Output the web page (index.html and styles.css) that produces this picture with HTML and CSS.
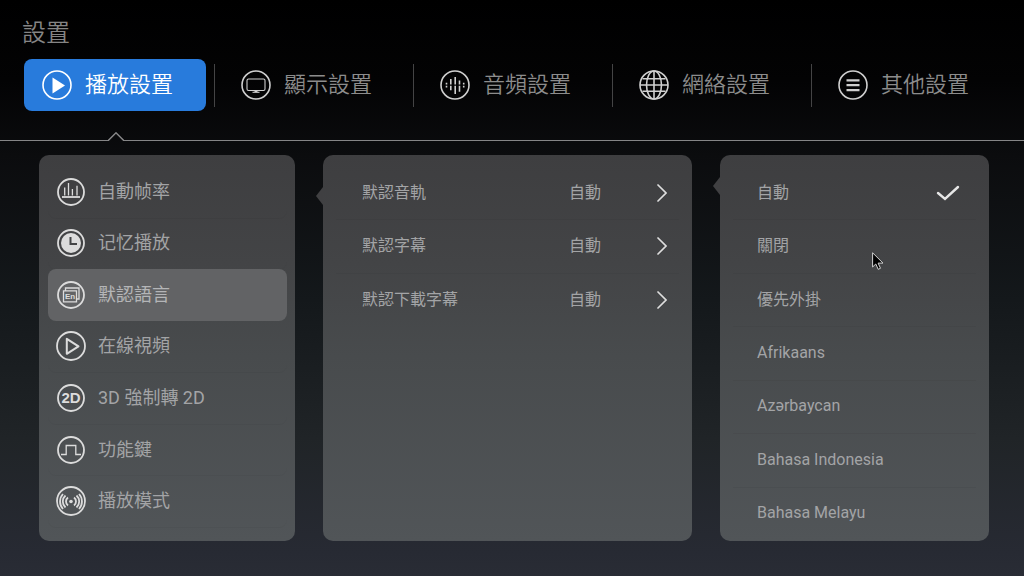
FILE: index.html
```html
<!DOCTYPE html>
<html lang="zh-Hant">
<head>
    <meta charset="UTF-8">
    <meta name="viewport" content="width=device-width, initial-scale=1">
    <title>設置</title>
    <link rel="stylesheet" href="styles.css">
</head>
<body>
<h1 class="title">設置</h1>
<nav class="tabs">
    <div class="tab-cell">
        <button class="tab active">
            <svg class="icon" viewBox="0 0 30 30"><circle cx="15" cy="15" r="14"/><path class="fill" d="M10.500 7.500v16l12.500-8z"/></svg>
            <span>播放設置</span>
        </button>
    </div>
    <div class="tab-cell">
        <button class="tab">
            <svg class="icon" viewBox="0 0 30 30"><circle cx="15" cy="15" r="14"/><rect class="thin" x="6" y="9" width="18" height="11.500" rx="1.500"/><path class="thin" d="M11.500 22.300h7"/><path class="fill" d="M13.500 20h3v2h-3z"/></svg>
            <span>顯示設置</span>
        </button>
    </div>
    <div class="tab-cell">
        <button class="tab">
            <svg class="icon" viewBox="0 0 30 30"><circle cx="15" cy="15" r="14"/><path d="M6.500 12.800v1.700M6.500 15.800v1.700M10.800 9v5.500M10.800 15.800v4.500M15.200 7v7.500M15.200 15.800v8.200M19.500 10.500v4M19.500 15.800v6M23.700 12.800v1.700M23.700 15.800v1.700"/></svg>
            <span>音頻設置</span>
        </button>
    </div>
    <div class="tab-cell">
        <button class="tab">
            <svg class="icon" viewBox="0 0 30 30"><circle cx="15" cy="15" r="14"/><ellipse cx="15" cy="15" rx="7.500" ry="14"/><path d="M15 1v28M1 15h28M3.500 8.800h23M3.500 21.200h23"/></svg>
            <span>網絡設置</span>
        </button>
    </div>
    <div class="tab-cell">
        <button class="tab">
            <svg class="icon" viewBox="0 0 30 30"><circle cx="15" cy="15" r="14"/><path class="thick" d="M8.500 10.300h13M8.500 15.200h13M8.500 20.200h13"/></svg>
            <span>其他設置</span>
        </button>
    </div>
</nav>
<div class="divider">
    <span class="line-left"></span>
    <svg class="caret" viewBox="0 0 16 9"><path d="M0 8.300h0.500L8 0.800l7.500 7.500h.5"/></svg>
    <span class="line-right"></span>
</div>
<main class="panels">
    <section class="panel menu">
        <button class="menu-item">
            <svg class="icon" viewBox="0 0 30 30"><circle cx="15" cy="15" r="13"/><path d="M6 20h18"/><path class="mid" d="M8.700 10.500v8M12.500 6v12.500M16.400 12v6.500M21 8.800v9.700"/></svg>
            <span>自動帧率</span>
        </button>
        <button class="menu-item">
            <svg class="icon" viewBox="0 0 30 30"><circle cx="15" cy="15" r="13"/><circle class="fill" cx="15" cy="15" r="10"/><path class="hands" d="M14.500 9v7h6.500"/></svg>
            <span>记忆播放</span>
        </button>
        <button class="menu-item selected">
            <svg class="icon" viewBox="0 0 30 30"><circle cx="15" cy="15" r="13"/><path class="mid" d="M7.500 10.800h13v11h-13zM9.500 10.500v-2.500h13.500v11h-2.500"/><text class="en" x="14" y="19">En</text></svg>
            <span>默認語言</span>
        </button>
        <button class="menu-item">
            <svg class="icon" viewBox="0 0 30 30"><circle cx="15" cy="15" r="14"/><path class="round" d="M10.800 7.800v15l11.700-7.500z"/></svg>
            <span>在線視頻</span>
        </button>
        <button class="menu-item">
            <svg class="icon" viewBox="0 0 30 30"><circle cx="15" cy="15" r="13"/><text class="two-d" x="15" y="20">2D</text></svg>
            <span>3D 強制轉 2D</span>
        </button>
        <button class="menu-item">
            <svg class="icon" viewBox="0 0 30 30"><circle cx="15" cy="15" r="13"/><path class="mid" d="M5 19.500h5.200v-9h9.600v9H25"/></svg>
            <span>功能鍵</span>
        </button>
        <button class="menu-item">
            <svg class="icon" viewBox="0 0 30 30"><circle cx="15" cy="15" r="14"/><circle class="fill" cx="15" cy="15.500" r="1.800"/><path d="M12 11.500a5 5 0 0 0 0 8M9.500 9.500a8 8 0 0 0 0 12M7 8a11 11 0 0 0 0 15M18 11.500a5 5 0 0 1 0 8M20.500 9.500a8 8 0 0 1 0 12M23 8a11 11 0 0 1 0 15"/></svg>
            <span>播放模式</span>
        </button>
    </section>
    <section class="panel options notch-low">
        <button class="row">
            <span class="name">默認音軌</span>
            <span class="value">自動</span>
            <svg class="arrow" viewBox="0 0 10 18"><path d="M1 1l8 8-8 8"/></svg>
        </button>
        <button class="row">
            <span class="name">默認字幕</span>
            <span class="value">自動</span>
            <svg class="arrow" viewBox="0 0 10 18"><path d="M1 1l8 8-8 8"/></svg>
        </button>
        <button class="row">
            <span class="name">默認下載字幕</span>
            <span class="value">自動</span>
            <svg class="arrow" viewBox="0 0 10 18"><path d="M1 1l8 8-8 8"/></svg>
        </button>
    </section>
    <section class="panel options languages notch-high">
        <label class="row"><input type="radio" name="track" checked><span class="name">自動</span><svg class="check" viewBox="0 0 24 16"><path d="M2 8l7 6L22 2"/></svg></label>
        <label class="row"><input type="radio" name="track"><span class="name">關閉</span><svg class="check" viewBox="0 0 24 16"><path d="M2 8l7 6L22 2"/></svg></label>
        <label class="row"><input type="radio" name="track"><span class="name">優先外掛</span><svg class="check" viewBox="0 0 24 16"><path d="M2 8l7 6L22 2"/></svg></label>
        <label class="row"><input type="radio" name="track"><span class="name">Afrikaans</span><svg class="check" viewBox="0 0 24 16"><path d="M2 8l7 6L22 2"/></svg></label>
        <label class="row"><input type="radio" name="track"><span class="name">Azərbaycan</span><svg class="check" viewBox="0 0 24 16"><path d="M2 8l7 6L22 2"/></svg></label>
        <label class="row"><input type="radio" name="track"><span class="name">Bahasa Indonesia</span><svg class="check" viewBox="0 0 24 16"><path d="M2 8l7 6L22 2"/></svg></label>
        <label class="row"><input type="radio" name="track"><span class="name">Bahasa Melayu</span><svg class="check" viewBox="0 0 24 16"><path d="M2 8l7 6L22 2"/></svg></label>
        <svg class="pointer" viewBox="0 0 12 18"><path d="M.6.800v14.200l3.200-3 2.400 5.300 2.300-1-2.400-5.200h4.900z"/></svg>
    </section>
</main>
</body>
</html>
```
FILE: styles.css
```css
* {
    box-sizing: border-box;
}
body {
    margin: 0;
    min-height: 100vh;
    display: flex;
    flex-direction: column;
    font-family: Roboto, "Noto Sans CJK TC", sans-serif;
    color: #a3a4a6;
    background: linear-gradient(#000 0%, #030304 14%, #0b0c0e 27%, #14181b 52%, #202427 76%, #272a33 96%, #292c35 100%);
}
button {
    font: inherit;
    color: inherit;
    background: none;
    border: 0;
    margin: 0;
    padding: 0;
    text-align: left;
    cursor: pointer;
}
.title {
    margin: 0;
    padding: 17px 22px 10px;
    font-size: 24px;
    line-height: 32px;
    font-weight: 350;
    color: #858585;
}

/* top tabs */
.tabs {
    display: grid;
    grid-template-columns: repeat(5, 1fr);
    padding: 0 5px 0 24px;
}
.tab-cell {
    display: flex;
    align-items: center;
    gap: 8px;
    padding-right: 8px;
}
.tab-cell::after {
    content: "";
    width: 1px;
    height: 43px;
    background: #444445;
}
.tab-cell:last-child::after {
    visibility: hidden;
}
.tab {
    flex: 1;
    height: 52px;
    display: flex;
    align-items: center;
    gap: 13px;
    padding-left: 18px;
    border-radius: 8px;
    font-size: 22px;
    line-height: 32px;
    font-weight: 350;
    white-space: nowrap;
    color: #8c8c8c;
}
.tab.active {
    background: #287bdc;
    color: #fff;
}
.tab.active .icon {
    color: #fff;
}

/* icons */
.icon {
    width: 30px;
    height: 30px;
    flex: none;
    color: #d0d0d0;
    fill: none;
    stroke: currentColor;
    stroke-width: 1.6;
}
.icon .fill {
    fill: currentColor;
    stroke: none;
}
.icon .thin {
    stroke-width: 1.1;
}
.icon .mid {
    stroke-width: 1.3;
}
.icon .thick {
    stroke-width: 2.2;
}
.icon .round {
    stroke-linejoin: round;
    stroke-width: 2;
}
.icon .hands {
    stroke: #434446;
    stroke-width: 2;
}
.icon text {
    fill: currentColor;
    stroke: none;
    font-family: "Liberation Sans", sans-serif;
    font-weight: 700;
    text-anchor: middle;
}
.en {
    font-size: 8px;
}
.two-d {
    font-size: 15px;
}

/* line with the caret under the active tab */
.divider {
    display: flex;
    margin-top: 21px;
    height: 9px;
}
.divider span {
    border-bottom: 1px solid #858586;
}
.line-left {
    width: 108px;
}
.line-right {
    flex: 1;
}
.caret {
    width: 16px;
    height: 9px;
    fill: none;
    stroke: #8a8a8b;
    stroke-width: 1.4;
}

/* panels */
.panels {
    flex: 1;
    display: grid;
    grid-template-columns: 256fr 369fr 269fr;
    column-gap: 28px;
    padding: 14px 35px 35px 39px;
}
.panel {
    position: relative;
    display: grid;
    grid-template-rows: repeat(7, 1fr);
    border-radius: 10px;
    background: linear-gradient(#3e3e40, #434446 28%, #484b4d 52%, #515558);
}
.menu {
    padding: 11px 8px 14px 9px;
}
.menu-item {
    display: flex;
    align-items: center;
    gap: 12px;
    padding-left: 8px;
    font-size: 18px;
    line-height: 26px;
    border-radius: 8px;
}
.menu-item .icon {
    color: #dcdcdc;
    stroke-width: 1.8;
}
.menu-item.selected {
    background: #626365;
    color: #b4b5b7;
}
.menu-item:not(.selected) {
    box-shadow: 0 1px 0 rgba(0, 0, 0, .03);
}
.options {
    padding: 11px 13px 1px;
}
.row {
    display: flex;
    align-items: center;
    padding: 0 12px 0 26px;
    font-size: 16px;
    line-height: 24px;
    box-shadow: 0 1px 0 rgba(0, 0, 0, .04);
}
.row:last-of-type {
    box-shadow: none;
}
.name {
    flex: 1;
}
.value {
    width: 88px;
}
.arrow {
    width: 10px;
    height: 18px;
    fill: none;
    stroke: #dedede;
    stroke-width: 1.7;
    stroke-linecap: round;
}
.languages .row {
    padding: 0 16px 0 24px;
    position: relative;
}
.languages input {
    position: absolute;
    opacity: 0;
}
.check {
    display: none;
    width: 24px;
    height: 16px;
    fill: none;
    stroke: #e6e6e6;
    stroke-width: 2.4;
    stroke-linecap: round;
}
input:checked ~ .check {
    display: block;
}
.options::before {
    content: "";
    position: absolute;
    right: 100%;
    width: 7px;
    height: 18px;
    background: #404042;
    clip-path: polygon(100% 0, 0 50%, 100% 100%);
}
.notch-low::before {
    top: 32px;
}
.notch-high::before {
    top: 22px;
}
.pointer {
    position: absolute;
    left: 152px;
    top: 97px;
    width: 12px;
    height: 18px;
    fill: #000;
    stroke: #d0d0d0;
    stroke-width: 1;
}
```
